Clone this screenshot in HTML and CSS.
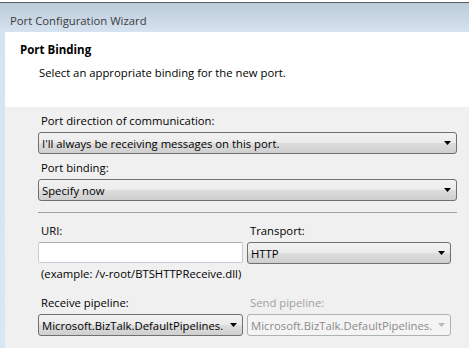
FILE: index.html
```html
<!DOCTYPE html>
<html lang="en">

<head>
    <meta charset="UTF-8">
    <title>Port Configuration Wizard</title>
    <link rel="stylesheet" href="styles.css">
</head>

<body>
    <div class="window">
        <span class="tick"></span>
        <div class="titlebar">Port Configuration Wizard</div>

        <div class="frame">
            <div class="header">
                <h1>Port Binding</h1>
                <p>Select an appropriate binding for the new port.</p>
            </div>

            <div class="content">
                <label>Port direction of communication:</label>
                <div class="combo wide">
                    <span>I'll always be receiving messages on this port.</span>
                    <svg width="7" height="4" viewBox="0 0 7 4"><path d="M0 0h7L3.5 4z" fill="#000" /></svg>
                </div>

                <label>Port binding:</label>
                <div class="combo wide">
                    <span>Specify now</span>
                    <svg width="7" height="4" viewBox="0 0 7 4"><path d="M0 0h7L3.5 4z" fill="#000" /></svg>
                </div>

                <hr class="separator">

                <div class="grid">
                    <div class="field">
                        <label>URI:</label>
                        <div class="textbox"></div>
                        <div class="hint">(example: /v-root/BTSHTTPReceive.dll)</div>
                    </div>
                    <div class="field">
                        <label>Transport:</label>
                        <div class="combo">
                            <span>HTTP</span>
                            <svg width="7" height="4" viewBox="0 0 7 4"><path d="M0 0h7L3.5 4z" fill="#000" /></svg>
                        </div>
                    </div>

                    <div class="field pipeline">
                        <label>Receive pipeline:</label>
                        <div class="combo">
                            <span>Microsoft.BizTalk.DefaultPipelines.</span>
                            <svg width="7" height="4" viewBox="0 0 7 4"><path d="M0 0h7L3.5 4z" fill="#000" /></svg>
                        </div>
                    </div>
                    <div class="field pipeline disabled">
                        <label>Send pipeline:</label>
                        <div class="combo">
                            <span>Microsoft.BizTalk.DefaultPipelines.</span>
                            <svg width="7" height="4" viewBox="0 0 7 4"><path d="M0 0h7L3.5 4z" fill="#b8b8b8" /></svg>
                        </div>
                    </div>
                </div>
            </div>
        </div>
    </div>
</body>

</html>
```

FILE: styles.css
```css
body {
    margin: 0;
    background-color: #fff;
    font-family: "Open Sans", "DejaVu Sans", sans-serif;
    font-size: 11.3px;
    color: #000;
}

.window {
    position: relative;
    margin-top: 2px;
    height: 346px;
    border-top: 1px solid #5b5b5b;
    background: linear-gradient(#bccbd9, #d6e3f0 30px, #dbe6f3);
    overflow: hidden;
}

.tick {
    position: absolute;
    left: 399px;
    top: -3px;
    width: 1px;
    height: 3px;
    background-color: #8a8a8a;
}

.titlebar {
    height: 29px;
    box-sizing: border-box;
    padding: 4px 0 0 10px;
    line-height: 27px;
    color: #3c3c3c;
}

.frame {
    margin-left: 5px;
    height: 100%;
    background-color: #f0f0f0;
}

.header {
    height: 75px;
    background-color: #fff;
    padding-left: 15px;
    box-sizing: border-box;
    padding-top: 10px;
}

.header h1 {
    margin: 0;
    font-size: 11.5px;
    font-weight: bold;
    line-height: 16px;
}

.header p {
    margin: 7px 0 0 19px;
    line-height: 16px;
}

.content {
    padding: 6px 12px 0 33px;
}

label {
    display: block;
    line-height: 16px;
    padding-left: 3px;
    margin-bottom: 3px;
}

.combo {
    display: flex;
    align-items: center;
    justify-content: space-between;
    height: 20px;
    padding: 0 5px 0 3px;
    border: 1px solid #707070;
    border-radius: 3px;
    background: linear-gradient(#f2f2f2, #ebebeb 50%, #dddddd 50%, #cfcfcf);
    white-space: nowrap;
    overflow: hidden;
}

.combo span {
    overflow: hidden;
}

.combo svg {
    flex-shrink: 0;
    margin-left: 4px;
}

.wide {
    margin-bottom: 6px;
}

.separator {
    margin: 11px 0 10px;
    border: none;
    border-top: 1px solid #a0a0a0;
}

.grid {
    display: grid;
    grid-template-columns: 205px 204px;
    column-gap: 4px;
}

.textbox {
    height: 19px;
    border: 1px solid #c5cdd6;
    border-top-color: #abadb3;
    border-radius: 2px;
    background-color: #fff;
}

.hint {
    margin-top: 3px;
    line-height: 16px;
    padding-left: 3px;
    white-space: nowrap;
}

.pipeline {
    margin-top: 13px;
}

.disabled label {
    color: #a0a0a0;
}

.disabled .combo {
    border-color: #adb2b5;
    background: #f4f4f4;
    color: #8a8a8a;
}
```
